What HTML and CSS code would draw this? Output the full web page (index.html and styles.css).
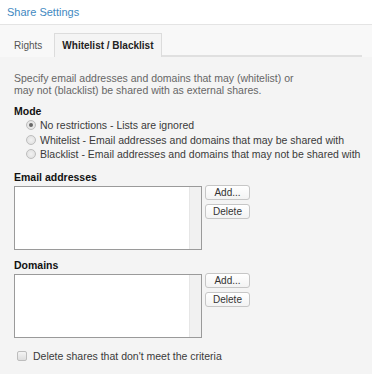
FILE: index.html
```html
<!DOCTYPE html>
<html>
<head>
<meta charset="utf-8">
<link rel="stylesheet" href="styles.css">
</head>
<body>
<div class="header">Share Settings</div>
<div class="tabbar">
  <div class="tab">Rights</div>
  <div class="tab active">Whitelist / Blacklist</div>
  <div class="tab-fill"></div>
</div>
<div class="content">
  <p class="desc">Specify email addresses and domains that may (whitelist) or<br>may not (blacklist) be shared with as external shares.</p>
  <div class="label">Mode</div>
  <div class="radios">
    <div class="radio-row"><span class="radio checked"></span>No restrictions - Lists are ignored</div>
    <div class="radio-row"><span class="radio"></span>Whitelist - Email addresses and domains that may be shared with</div>
    <div class="radio-row"><span class="radio"></span>Blacklist - Email addresses and domains that may not be shared with</div>
  </div>
  <div class="label label-list">Email addresses</div>
  <div class="list-row">
    <div class="listbox"><div class="scroll"></div></div>
    <div class="buttons">
      <div class="btn">Add...</div>
      <div class="btn">Delete</div>
    </div>
  </div>
  <div class="label label-list">Domains</div>
  <div class="list-row">
    <div class="listbox"><div class="scroll"></div></div>
    <div class="buttons">
      <div class="btn">Add...</div>
      <div class="btn">Delete</div>
    </div>
  </div>
  <div class="check-row"><span class="checkbox"></span>Delete shares that don't meet the criteria</div>
</div>
</body>
</html>
```
FILE: styles.css
```css
html, body {
  margin: 0;
  padding: 0;
  background: #f4f4f4;
  font-family: "Liberation Sans", Arial, sans-serif;
  font-size: 10.5px;
  color: #333;
}
.header {
  height: 24px;
  line-height: 24px;
  padding-left: 7px;
  background: #fff;
  color: #3f89c1;
  font-size: 11px;
  border-bottom: 1px solid #e4e4e4;
}
.tabbar {
  display: flex;
  align-items: flex-end;
  background: #f8f8f8;
  padding-top: 8px;
  padding-right: 10px;
}
.tab {
  height: 22px;
  line-height: 22px;
  color: #555;
  font-size: 10px;
  white-space: nowrap;
}
.tab:first-child {
  padding-left: 14px;
  padding-right: 12px;
}
.tab.active {
  font-weight: bold;
  color: #222;
  background: #f4f4f4;
  border: 1px solid #dcdcdc;
  border-bottom: none;
  height: 23px;
  line-height: 24px;
  padding: 0 7px;
}
.tab-fill {
  flex: 1;
  border-bottom: 2px solid #e0e0e0;
}
.content {
  padding: 15px 10px 10px 14px;
}
.desc {
  margin: 0;
  color: #666;
  line-height: 12px;
}
.label {
  font-weight: bold;
  color: #111;
  margin-top: 9px;
  line-height: 12px;
}
.radios {
  margin-top: 1px;
}
.radio-row {
  display: flex;
  align-items: center;
  height: 14.5px;
  padding-left: 12px;
  color: #3a3a3a;
  white-space: nowrap;
}
.radio {
  width: 8px;
  height: 8px;
  border: 1px solid #bdbdbd;
  border-radius: 50%;
  background: radial-gradient(circle, #f2f2f2 0%, #dcdcdc 100%);
  margin-right: 4px;
  position: relative;
  flex: none;
}
.radio.checked::after {
  content: "";
  position: absolute;
  left: 2px;
  top: 2px;
  width: 4px;
  height: 4px;
  border-radius: 50%;
  background: #666;
}
.label-list {
  margin-top: 9px;
}
.list-row {
  display: flex;
  margin-top: 3px;
}
.listbox {
  width: 186px;
  height: 62px;
  border: 1px solid #9a9a9a;
  background: #fff;
  display: flex;
  justify-content: flex-end;
}
.scroll {
  width: 11px;
  background: #f1f1f1;
  border-left: 1px solid #e6e6e6;
}
.buttons {
  margin-left: 3px;
  display: flex;
  flex-direction: column;
  gap: 4px;
  margin-top: -1px;
}
.btn {
  width: 43px;
  height: 13px;
  line-height: 13px;
  text-align: center;
  border: 1px solid #c6c6c6;
  border-radius: 3px;
  background: linear-gradient(#ffffff, #f3f3f3);
  color: #333;
  font-size: 10px;
}
.check-row {
  display: flex;
  align-items: center;
  margin-top: 12px;
  padding-left: 3px;
  color: #3a3a3a;
}
.checkbox {
  width: 8px;
  height: 8px;
  border: 1px solid #bdbdbd;
  border-radius: 2px;
  background: linear-gradient(#f4f4f4, #dedede);
  margin-right: 6px;
}
```
